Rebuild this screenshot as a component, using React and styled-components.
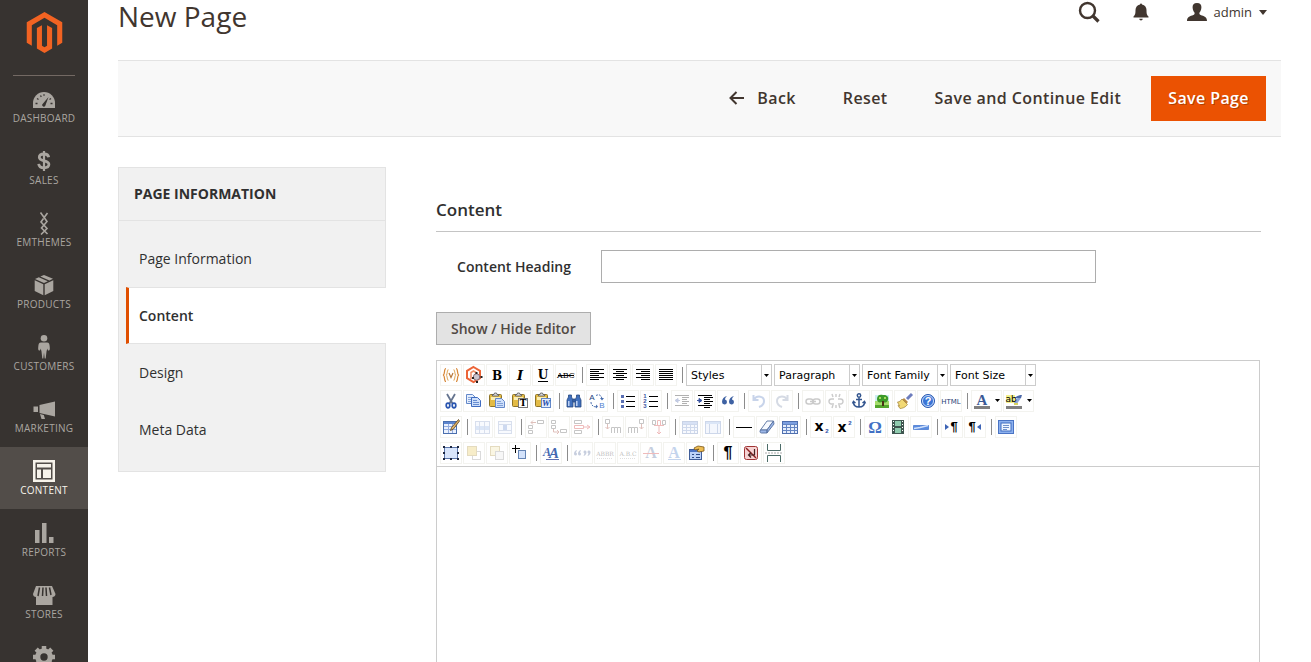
import React from 'react';
import styled, { createGlobalStyle, css } from 'styled-components';

const GlobalStyle = createGlobalStyle`
  *, *::before, *::after { box-sizing: border-box; }
  body {
    margin: 0;
    background: #fff;
    color: #41362f;
    font-family: 'Open Sans', 'Noto Sans', sans-serif;
    font-size: 14px;
  }
  button, input, select, textarea { font: inherit; color: inherit; border-radius: 0; }
  svg { display: block; }
`;

/* ---------- shell ---------- */

const Shell = styled.div`
  display: flex;
  height: 100vh;
  overflow: hidden;
`;

const Sidebar = styled.nav`
  flex: 0 0 88px;
  background: #373330;
  overflow: hidden;
`;

const LogoLink = styled.a`
  display: flex;
  justify-content: center;
  height: 75px;
  padding-top: 12px;
`;

const Menu = styled.ul`
  list-style: none;
  margin: 0;
  padding: 0;
  &::before {
    content: '';
    display: block;
    height: 1px;
    margin: 0 13px -1px;
    background: #736963;
  }
`;

const MenuLink = styled.a`
  display: grid;
  grid-template-rows: 24px 14px;
  justify-items: center;
  align-items: center;
  height: 62px;
  padding-top: 12px;
  align-content: start;
  font-size: 10px;
  line-height: 14px;
  letter-spacing: 0.025em;
  text-transform: uppercase;
  text-decoration: none;
  color: ${(p) => (p.$active ? '#f7f3eb' : '#aaa6a0')};
  background: ${(p) => (p.$active ? '#524d49' : 'transparent')};
`;

const Main = styled.main`
  flex: 1;
  min-width: 0;
  padding: 0 30px;
  overflow: hidden;
`;

/* ---------- header ---------- */

const Header = styled.header`
  display: flex;
  justify-content: space-between;
  height: 60px;
`;

const Title = styled.h1`
  margin: 0;
  font-size: 28px;
  line-height: 32px;
  font-weight: 400;
`;

const HeaderTools = styled.div`
  display: flex;
  align-items: center;
  height: 24px;
  padding-right: 14px;
`;

const HeaderButton = styled.button`
  display: flex;
  align-items: center;
  gap: 7px;
  margin-left: ${(p) => p.$gap || 0}px;
  padding: 0;
  border: 0;
  background: none;
  font-size: 13px;
  line-height: 22px;
`;

const UserName = styled.span`
  padding-bottom: 1px;
`;

/* ---------- page actions ---------- */

const ActionBar = styled.div`
  display: flex;
  justify-content: flex-end;
  align-items: center;
  gap: 13px;
  height: 77px;
  padding-right: 15px;
  border-top: 1px solid #e3e3e3;
  border-bottom: 1px solid #e3e3e3;
  background: #f8f8f8;
`;

const ActionButton = styled.button`
  display: flex;
  align-items: center;
  gap: 13px;
  height: 45px;
  padding: 0 17px 2px;
  border: 0;
  background: none;
  font-size: 16px;
  font-weight: 600;
  letter-spacing: 0.025em;
  ${(p) =>
    p.$primary &&
    css`
      background: #eb5202;
      color: #fff;
      text-shadow: 1px 1px 0 rgba(0, 0, 0, 0.25);
    `}
`;

/* ---------- columns ---------- */

const Columns = styled.div`
  display: grid;
  grid-template-columns: 268px minmax(0, 1fr);
  column-gap: 50px;
  align-items: start;
  padding: 30px 20px 0 0;
`;

const Tabs = styled.aside`
  border: 1px solid #e3e3e3;
  background: #f1f1f1;
`;

const TabsTitle = styled.h2`
  margin: 0;
  padding: 0 15px;
  border-bottom: 1px solid #e3e3e3;
  font-size: 14px;
  line-height: 52px;
  font-weight: 700;
  color: #303030;
  text-transform: uppercase;
`;

const TabList = styled.ul`
  list-style: none;
  margin: 0;
  padding: 9px 0 13px;
`;

const TabLink = styled.a`
  display: block;
  padding: 0 20px;
  line-height: 57px;
  color: #303030;
  text-decoration: none;
  ${(p) =>
    p.$active &&
    css`
      margin: 0 -1px 0 7px;
      padding-left: 10px;
      border: solid #e3e3e3;
      border-width: 1px 0;
      border-left: 3px solid #e04f00;
      background: #fff;
      line-height: 55px;
      font-weight: 600;
    `}
`;

const SectionTitle = styled.h2`
  margin: 0 0 18px;
  padding: 28px 0 7px;
  border-bottom: 1px solid #c4c4c4;
  font-size: 17px;
  line-height: 29px;
  font-weight: 600;
  color: #303030;
`;

const Field = styled.div`
  display: grid;
  grid-template-columns: 20% 60%;
  align-items: center;
  margin-bottom: 29px;
`;

const FieldLabel = styled.label`
  padding-right: 30px;
  text-align: right;
  font-weight: 600;
  color: #303030;
`;

const TextInput = styled.input`
  height: 33px;
  padding: 0 10px;
  border: 1px solid #adadad;
  background: #fff;
`;

const ToggleButton = styled.button`
  display: block;
  height: 33px;
  margin-bottom: 15px;
  padding: 0 14px;
  border: 1px solid #adadad;
  background: #e3e3e3;
  color: #514943;
  font-weight: 600;
`;

/* ---------- editor ---------- */

const Editor = styled.div`
  margin-right: 1px;
  border: 1px solid #ccc;
`;

const Toolbar = styled.div`
  padding: 1px 3px 0;
  border-bottom: 1px solid #ccc;
`;

const ToolRow = styled.div`
  display: flex;
  align-items: center;
  height: 26px;
`;

const ToolButton = styled.button`
  display: flex;
  align-items: center;
  flex: 0 0 auto;
  width: ${(p) => (p.$split ? 31 : 22)}px;
  height: 22px;
  margin-right: 1px;
  padding: 0;
  border: 1px solid #f3f3ef;
  background: #fff;
  svg { opacity: ${(p) => (p.disabled ? 0.3 : 1)}; }
`;

const Separator = styled.span`
  flex: 0 0 1px;
  height: 16px;
  margin: 0 3px 0 4px;
  background: #8c8c8c;
`;

const SelectBox = styled.span`
  display: flex;
  width: 86px;
  height: 22px;
  margin-right: 2px;
  border: 1px solid #ccc;
  background: #fff;
`;

const Select = styled.select`
  flex: 1;
  min-width: 0;
  padding: 0 0 0 4px;
  border: 0;
  background: none;
  appearance: none;
  font-family: 'DejaVu Sans', sans-serif;
  font-size: 11px;
  color: #000;
`;

const SelectArrow = styled.span`
  display: grid;
  place-items: center;
  width: 10px;
  border-left: 1px solid #ccc;
`;

const EditArea = styled.textarea`
  display: block;
  width: 100%;
  height: 400px;
  padding: 8px;
  border: 0;
  outline: 0;
  resize: none;
`;

/* ---------- editor icons, all drawn on a 20 x 20 grid ---------- */

const Glyph = ({ children, w = 20 }) => (
  <svg width={w} height="20" viewBox={`0 0 ${w} 20`} aria-hidden="true">{children}</svg>
);

const SERIF = "'Liberation Serif', serif";
const SLAB = "'DejaVu Serif', serif";
const SANS = "'Liberation Sans', sans-serif";
const WIDE = "'DejaVu Sans', sans-serif";

const T = ({ label, x = 10, y = 15, size = 14, fill = '#000', face = SERIF, bold, italic }) => (
  <text
    x={x}
    y={y}
    fontSize={size}
    fill={fill}
    textAnchor="middle"
    fontFamily={face}
    fontWeight={bold ? 700 : 400}
    fontStyle={italic ? 'italic' : 'normal'}
  >
    {label}
  </text>
);

const Lines = ({ d, color = '#000', w = 1 }) => <path d={d} stroke={color} strokeWidth={w} fill="none" />;

const Sheet = ({ x, y, fill = '#e4eefd', stroke = '#6488c8' }) => (
  <g>
    <path d={`M${x + 0.5} ${y + 0.5}h6l3 3v6h-9z`} fill={fill} stroke={stroke} />
    <path d={`M${x + 2} ${y + 3.5}h4M${x + 2} ${y + 5.5}h6M${x + 2} ${y + 7.5}h6`} stroke={stroke} opacity=".7" />
  </g>
);

const Clipboard = () => (
  <g>
    <rect x="2.5" y="3.500" width="12" height="12" rx="1" fill="#e3bb45" stroke="#8f7426" />
    <path d="M4 7.500h9" stroke="#fbeeb4" strokeWidth="3" />
    <path d="M5.500 5V3.500H7L7.500 2h2l.5 1.500h1.500V5z" fill="#dcdcdc" stroke="#555" strokeWidth=".8" />
  </g>
);

const Grid = () => (
  <g>
    <rect x="2.500" y="4.500" width="15" height="12" fill="#e6eefc" stroke="#4f6fae" />
    <path d="M3 6h14" stroke="#7c9fe0" strokeWidth="2" />
    <path d="M2.500 7.500h15M2.500 10.500h15M2.500 13.500h15M6.500 7v9M10.500 7v9M14.500 7v9" stroke="#6485c2" fill="none" />
  </g>
);

const icons = {
  variable: (
    <g stroke="#d8893a" fill="none" strokeWidth="1.200">
      <path d="M5 3.500C2.500 3.500 4.500 9.500 2 10c2.500.5.5 6.500 3 6.500M15 3.500c2.500 0 .5 6 3 6.500-2.500.5-.5 6.500-3 6.500" />
      <path d="M7.500 4.500C5.500 5 7 9.500 5 10c2 .5.5 5 2.500 5.500M12.500 4.500c2 .5.5 5 2.500 5.500-2 .5-.5 5-2.500 5.500" stroke="#e3b26f" />
      <path d="M8 8l2 4.500L12 8" stroke="#b8783a" />
    </g>
  ),
  widget: (
    <g>
      <path d="M9.500 2l6.500 3.800v7.400L9.500 17 3 13.200V5.800z" fill="#fff" stroke="#ec6437" strokeWidth="2" />
      <path d="M7 14V7.500L9.500 6 12 7.500V14" fill="none" stroke="#f0906a" strokeWidth="1.600" />
      <circle cx="12.500" cy="12" r="3.200" fill="#c9c5cf" stroke="#8a6d78" />
      <path d="M11.500 7h2v2h-2zM16.500 11h2v2h-2zM12 16h2v2h-2zM8 12h2v2H8z" fill="#222" />
    </g>
  ),
  bold: <T label="B" size={12} face={SLAB} bold />,
  italic: <T label="I" size={13} face={SLAB} bold italic />,
  underline: (<g><T label="U" size={12} y={14} face={SLAB} bold /><Lines d="M5 16.500h10" /></g>),
  strike: (<g><T label="ABC" size={8} y={13} face={SLAB} /><Lines d="M2 10.500h16" /></g>),
  left: <Lines d="M3 4.500h14M3 6.500h9M3 8.500h14M3 10.500h9M3 12.500h14M3 14.500h9" />,
  center: <Lines d="M3 4.500h14M6 6.500h8M3 8.500h14M6 10.500h8M3 12.500h14M6 14.500h8" />,
  right: <Lines d="M3 4.500h14M8 6.500h9M3 8.500h14M8 10.500h9M3 12.500h14M8 14.500h9" />,
  full: <Lines d="M3 4.500h14M3 6.500h14M3 8.500h14M3 10.500h14M3 12.500h14M3 14.500h14" />,
  cut: (
    <g fill="none">
      <path d="M6 3l5.500 9.500M14 3L8.500 12.500" stroke="#66758f" strokeWidth="1.800" />
      <ellipse cx="7" cy="14.500" rx="1.800" ry="2.300" stroke="#2a56b0" strokeWidth="1.700" />
      <ellipse cx="13" cy="14.500" rx="1.800" ry="2.300" stroke="#2a56b0" strokeWidth="1.700" />
    </g>
  ),
  copy: (<g><Sheet x={2} y={3} /><Sheet x={7} y={6} fill="#cfe0fb" stroke="#3f6cc0" /></g>),
  paste: (<g><Clipboard /><Sheet x={8} y={7} fill="#cfe0fb" /></g>),
  pastetext: (
    <g><Clipboard /><rect x="8.500" y="7.500" width="9" height="9" fill="#fff" stroke="#777" />
      <T label="T" x={13} y={15} size={9} face={SLAB} bold /></g>
  ),
  pasteword: (
    <g><Clipboard /><rect x="8.500" y="7.500" width="9" height="9" fill="#e4eefd" stroke="#6488c8" />
      <T label="W" x={13} y={15} size={9} bold italic fill="#1d4aa8" /></g>
  ),
  search: (
    <g fill="#4070bd" stroke="#26487f" strokeWidth=".8">
      <path d="M4.500 4h3v2L9 9v7H3V9l1.500-3zM12.500 4h3v2L17 9v7h-6V9l1.500-3z" />
      <path d="M9 8h2v3H9z" />
      <path d="M4.800 10v5M12.800 10v5" stroke="#c7dafa" strokeWidth="1.400" />
    </g>
  ),
  replace: (
    <g>
      <T label="A" x={5} y={9} size={8} face={SANS} fill="#223f80" />
      <T label="B" x={15} y={17} size={8} face={SANS} fill="#4f7fd0" />
      <path d="M9 4.500c3-1.500 5-.5 6 3M4 11c0 3 2 5 6 5" fill="none" stroke="#4a6fae" strokeDasharray="2 1" />
      <path d="M13 7h4l-2 2.500zM9 13.500v4l2-2z" fill="#4a6fae" />
    </g>
  ),
  bullist: (
    <g><path d="M3 4h3v3H3zM3 9h3v3H3zM3 14h3v3H3z" fill="#5a70b4" /><Lines d="M8 5.500h9M8 10.500h9M8 15.500h9" /></g>
  ),
  numlist: (
    <g>
      {['1', '2', '3'].map((n, i) => (
        <T key={n} label={n} x={4} y={7 + i * 5} size={6} bold face={SANS} fill="#3a55a0" />
      ))}
      <Lines d="M8 5.500h9M8 10.500h9M8 15.500h9" />
    </g>
  ),
  outdent: (
    <g><Lines d="M3 4.500h14M10 6.500h7M10 8.500h5M10 10.500h7M10 12.500h5M3 14.500h14" /><path d="M8 9.500H5M6 7.500l-3 2 3 2z" stroke="#3a55a0" fill="#3a55a0" /></g>
  ),
  indent: (
    <g><Lines d="M3 4.500h14M9 6.500h9M9 8.500h6M9 10.500h9M9 12.500h6M3 14.500h14M9 16.500h6" /><path d="M2 9.500h4M4 7.500l3 2-3 2z" stroke="#3a55a0" fill="#3a55a0" /></g>
  ),
  quote: (
    <g fill="#3f62a3"><path d="M9 5c-3 .8-5 2.800-5 6a2.500 2.500 0 1 0 3-2.500C7 7 8 6 9 5zM16 5c-3 .8-5 2.800-5 6a2.500 2.500 0 1 0 3-2.500C14 7 15 6 16 5z" /></g>
  ),
  undo: <path d="M4.500 4v5h5M5 8.500C8 4 15 5 15 10c0 3-2 5-5 6" fill="none" stroke="#4b72bd" strokeWidth="2" />,
  redo: <path d="M15.500 4v5h-5M15 8.500C12 4 5 5 5 10c0 3 2 5 5 6" fill="none" stroke="#7788a8" strokeWidth="2" />,
  link: (
    <g fill="none" stroke="#555" strokeWidth="1.500"><rect x="3" y="8" width="7" height="5" rx="2.500" /><rect x="10" y="8" width="7" height="5" rx="2.500" /><path d="M7 10.500h6" /></g>
  ),
  unlink: (
    <g fill="none" stroke="#555" strokeWidth="1.400"><path d="M8 8H5.500a2.500 2.500 0 0 0 0 5H8M12 8h2.500a2.500 2.500 0 0 1 0 5H12" /><path d="M10 3v3M6 3l1 3M14 3l-1 3M10 14v3M6 17l1-3M14 17l-1-3" /></g>
  ),
  anchor: (
    <g fill="none" stroke="#34568f" strokeWidth="1.500"><circle cx="10" cy="4.500" r="1.700" /><path d="M10 6.500V16M7 8.500h6M4.500 11c0 3.500 2.500 5 5.500 5s5.500-1.500 5.500-5" /><path d="M3.500 12.500l1-2 2 1.500M16.500 12.500l-1-2-2 1.500" /></g>
  ),
  image: (
    <g>
      <rect x="3" y="4" width="14" height="13" fill="#a5dd6a" />
      <path d="M3 4h14v6H3z" fill="#cdeef2" />
      <path d="M3 14h14v3H3z" fill="#54a52c" />
      <path d="M5 8c0-4 3-5 6-4 4-.5 6 2 5 5-1 3-4 3-6 2-3 1-5 0-5-3z" fill="#3c9a28" />
      <path d="M7 6h2v2H7zM12 6h2v2h-2z" fill="#a4db5e" />
      <path d="M10 10h2v5h-2z" fill="#4b3216" />
    </g>
  ),
  cleanup: (
    <g><path d="M17 3l-5 5" stroke="#6d7dbd" strokeWidth="3" /><path d="M9 7l4 4-2 2-4-4z" fill="#b98a45" /><path d="M7 8l5.500 5.500C10.500 16.500 7 17.500 5 17.500L3 14.500l1.500.5L2.500 11c2 0 3.500-1.500 4.500-3z" fill="#f2d975" stroke="#a08336" strokeWidth=".7" /></g>
  ),
  help: (
    <g><circle cx="10" cy="10" r="6.500" fill="#3a74d6" stroke="#2a58ae" /><circle cx="10" cy="10" r="5.500" fill="none" stroke="#c9dcfa" />
      <T label="?" y={14} size={11} bold face={SANS} fill="#fff" /></g>
  ),
  html: <T label="HTML" y={13} size={7} face={WIDE} fill="#1f4274" />,
  forecolor: (
    <g><T label="A" x={10} y={14} size={15} bold fill="#3b5a96" /><path d="M2 15h16v3H2z" fill="#808080" /><path d="M23 8h5l-2.500 3z" /></g>
  ),
  backcolor: (
    <g><path d="M2 4h9v8H2z" fill="#f3f08a" /><path d="M11 13l5-7" stroke="#8ea6d8" strokeWidth="3" /><path d="M10 7c3-2 5-3 8-3l-1 3z" fill="#4d69a8" /><path d="M10 13h4" stroke="#d9d45f" strokeWidth="2" />
      <T label="ab" x={7} y={11} size={9} face={WIDE} /><path d="M2 15h16v3H2z" fill="#808080" /><path d="M23 8h5l-2.500 3z" /></g>
  ),
  table: (
    <g><rect x="2.500" y="4.500" width="13" height="12" fill="#eaf1fd" stroke="#4a6fae" /><path d="M3 6h12" stroke="#5c85cf" strokeWidth="2" /><path d="M3 9.500h12M3 12.500h12M7.500 7v9M11.500 7v9" stroke="#94ade0" />
      <path d="M17.500 2.500l-7 8-1 3 3-1.500 6-8z" fill="#e0b268" stroke="#59431f" strokeWidth=".8" /></g>
  ),
  rowprops: (<g><rect x="3.500" y="4.500" width="14" height="12" fill="#eaf1fd" stroke="#7f97c6" /><path d="M4 9h13v4H4z" fill="#8caee8" /><path d="M7.500 5v11M12.500 5v11" stroke="#7f97c6" /></g>),
  cellprops: (<g><rect x="3.500" y="4.500" width="13" height="12" fill="#eaf1fd" stroke="#7f97c6" /><path d="M8 8h4v5H8z" fill="#5c85cf" /><path d="M4 7.500h12M4 13.500h12" stroke="#7f97c6" /></g>),
  rowbefore: (<g fill="none" stroke="#444"><path d="M2.500 8.500h4v3h-4zM2.500 13.500h4v3h-4zM11.500 3.500h6v3h-6z" /><path d="M10 5.500H5M7 3.500l-2 2 2 2" stroke="#932" /></g>),
  rowafter: (<g fill="none" stroke="#444"><path d="M2.500 3.500h4v3h-4zM2.500 8.500h4v3h-4zM11.500 12.500h6v3h-6z" /><path d="M4.500 12v3H10M8 13l2 2-2 2" stroke="#932" /></g>),
  rowdelete: (<g fill="none" stroke="#444"><path d="M2.500 3.500h7v3h-7zM2.500 13.500h7v3h-7z" /><path d="M2.500 8.500h9v3h-9zM11 10h7M15 8l3 2-3 2" stroke="#c22" /></g>),
  colbefore: (<g fill="none" stroke="#444"><path d="M2.500 2.500h4v4h-4zM8.500 16V10.500h3V16M14.500 16V10.500h3V16M11.500 10.500h3" /><path d="M4.500 7v5M2.500 10l2 2 2-2" stroke="#932" /></g>),
  colafter: (<g fill="none" stroke="#444"><path d="M13.500 2.500h4v4h-4zM2.500 16V10.500h3V16M8.500 16V10.500h3V16M5.500 10.500h3" /><path d="M15.500 7v5M13.500 10l2 2 2-2" stroke="#932" /></g>),
  coldelete: (<g fill="none" stroke="#c22"><path d="M3.500 3.500h3v4h-3zM13.500 3.500h3v4h-3z" stroke="#444" /><path d="M8.500 3.500h3v5h-3zM10 9v8M8 15l2 2 2-2M5 8.500h10" /></g>),
  split: <Grid />,
  merge: (<g><rect x="2.500" y="4.500" width="15" height="12" fill="#dbe6fa" stroke="#5b7dbd" /><path d="M3 6h14" stroke="#8caee8" strokeWidth="2" /><path d="M6.500 7v9M14.500 7v9" stroke="#5b7dbd" /></g>),
  hr: <Lines d="M2 10.500h16" />,
  eraser: (<g stroke="#56709f" strokeWidth=".9"><path d="M10 4h6.500L10 13H3.500z" fill="#f6f9ff" /><path d="M3.500 13H10v3H4.500C3 16 2.500 14.500 3.500 13zM10 13l6.500-9 .5 3-7 9z" fill="#9db7e8" /></g>),
  grid: <Grid />,
  sub: (<g><T label="x" x={8} y={14} size={14} bold face={WIDE} /><T label="2" x={16} y={16} size={6} bold face={SANS} fill="#2a4fa8" /></g>),
  sup: (<g><T label="x" x={8} y={15} size={14} bold face={WIDE} /><T label="2" x={16} y={8} size={6} bold face={SANS} fill="#2a4fa8" /></g>),
  omega: <T label="Ω" y={16} size={17} bold fill="#4170c4" />,
  media: (<g><rect x="4" y="3" width="12" height="14" fill="#3f5650" /><path d="M7 4h6v5H7zM7 11h6v5H7z" fill="#8fcbae" /><path d="M5.500 4v12M14.500 4v12" stroke="#fff" strokeDasharray="1 2" /></g>),
  advhr: (<g><path d="M2.500 8.500h15v4h-15z" fill="#5a8ce0" stroke="#5f8ad6" /><path d="M3 11.500l6-1 8-2" stroke="#d2e2fc" strokeWidth="1.500" /></g>),
  ltr: (<g><path d="M3 7l4 3-4 3z" fill="#3d64b5" /><T label="¶" x={12} y={14} size={13} bold face={SANS} /></g>),
  rtl: (<g><T label="¶" x={7} y={14} size={13} bold face={SANS} /><path d="M16 7l-4 3 4 3z" fill="#3d64b5" /></g>),
  fullscreen: (<g><rect x="2.500" y="3.500" width="15" height="13" fill="#8db1ee" stroke="#4a74c4" /><rect x="5" y="6" width="10" height="8" fill="#f0f6ff" stroke="#3f6cc0" /><path d="M7 8.500h6M7 10.500h6M7 12.500h4" stroke="#6f90ca" /></g>),
  layer: (<g><rect x="3.500" y="4.500" width="13" height="11" fill="#d8e5fb" stroke="#5b76ab" /><path d="M2 3h2v2H2zM16 3h2v2h-2zM2 15h2v2H2zM16 15h2v2h-2zM9 3h2v2H9zM9 15h2v2H9zM2 9h2v2H2zM16 9h2v2h-2z" fill="#1d2740" /></g>),
  forward: (<g><rect x="8.500" y="8.500" width="8" height="8" fill="#fff" stroke="#888" /><rect x="3.500" y="3.500" width="9" height="9" fill="#e5c550" stroke="#a88c2e" /></g>),
  backward: (<g><rect x="3.500" y="3.500" width="9" height="9" fill="#efe3a6" stroke="#a88c2e" /><rect x="8.500" y="8.500" width="8" height="8" fill="#e8e8e8" stroke="#888" /></g>),
  absolute: (<g><rect x="8.500" y="7.500" width="7" height="8" fill="#d3e2fb" stroke="#6484b5" /><path d="M5.500 2v8M2 5.500h8" stroke="#000" /></g>),
  style: (
    <g><T label="A" x={6} y={13} size={12} italic bold fill="#4468b0" /><T label="A" x={13} y={15} size={15} italic bold fill="#4468b0" /><Lines d="M5 16.500h13" color="#5d6fb2" /></g>
  ),
  cite: (
    <g fill="#4a5f94">
      <path d="M5 7c-2 .5-3 2-3 4a1.500 1.500 0 1 0 2-1.500zM9 7c-2 .5-3 2-3 4a1.500 1.500 0 1 0 2-1.500z" />
      <path d="M11.500 13c2-.5 3-2 3-4a1.500 1.500 0 1 0-2 1.500zM15.500 13c2-.5 3-2 3-4a1.500 1.500 0 1 0-2 1.500z" />
    </g>
  ),
  abbr: (<g><T label="ABBR" y={13} size={6} face={SLAB} fill="#222" /><path d="M2 15.500h16" stroke="#999" strokeDasharray="1 1" /></g>),
  acronym: (<g><T label="A.B.C" y={13} size={6} face={SLAB} fill="#222" /><path d="M2 15.500h16" stroke="#999" strokeDasharray="1 1" /></g>),
  del: (<g><T label="A" y={15} size={16} bold fill="#445f96" /><Lines d="M2 10.500h16" color="#c22" /></g>),
  ins: (<g><T label="A" y={15} size={16} bold fill="#3f72c4" /><Lines d="M4 16.500h13" color="#3f72c4" /></g>),
  attribs: (
    <g><rect x="2.500" y="6.500" width="12" height="10" fill="#bcd2f8" stroke="#3f5d98" /><path d="M3 8h11" stroke="#4d74c5" strokeWidth="2" /><path d="M5 11.500h2M9 11.500h4M5 14.500h2M9 14.500h4" stroke="#2f4d88" />
      <path d="M7 5l4-2 6 1v4l-5 1-2-1 2-2-4 1z" fill="#edbc52" stroke="#7a5618" strokeWidth=".8" /></g>
  ),
  visualchars: <T label="¶" y={15} size={16} bold face={SANS} />,
  nonbreaking: (
    <g><rect x="3.500" y="3.500" width="13" height="13" rx="2" fill="#f6d3d3" stroke="#a03434" /><path d="M5 5l10 10" stroke="#8d2020" fill="none" strokeWidth="1.400" /><path d="M13.500 6v6H8M10 9.500L7.500 12l2.500 2.500" stroke="#442222" fill="none" strokeWidth="1.200" /></g>
  ),
  pagebreak: (
    <g fill="none" stroke="#4c6c68"><path d="M3.500 1v6.500h13V1M3.500 19v-6.500h13V19" /><path d="M1 10h18" strokeDasharray="2 1" stroke="#aaa" /></g>
  ),
};

/* '|' is a separator, '-' marks an unavailable command, '+' a button with a menu arrow */
const rows = [
  ['variable', 'widget', 'bold', 'italic', 'underline', 'strike', '|', 'left', 'center', 'right', 'full', '|'],
  ['cut', 'copy', 'paste', 'pastetext', 'pasteword', '|', 'search', 'replace', '|', 'bullist', 'numlist', '|',
    '-outdent', 'indent', 'quote', '|', '-undo', '-redo', '|', '-link', '-unlink', 'anchor', 'image', 'cleanup',
    'help', 'html', '|', '+forecolor', '+backcolor'],
  ['table', '|', '-rowprops', '-cellprops', '|', '-rowbefore', '-rowafter', '-rowdelete', '|', '-colbefore',
    '-colafter', '-coldelete', '|', '-split', '-merge', '|', 'hr', 'eraser', 'grid', '|', 'sub', 'sup', '|',
    'omega', 'media', 'advhr', '|', 'ltr', 'rtl', '|', 'fullscreen'],
  ['layer', '-forward', '-backward', 'absolute', '|', 'style', '|', '-cite', '-abbr', '-acronym', '-del', '-ins',
    'attribs', '|', 'visualchars', 'nonbreaking', 'pagebreak'],
];

const Tool = ({ code }) => {
  if (code === '|') return <Separator />;
  const name = code.replace(/^[-+]/, '');
  const split = code[0] === '+';
  return (
    <ToolButton type="button" aria-label={name} disabled={code[0] === '-'} $split={split}>
      <Glyph w={split ? 29 : 20}>{icons[name]}</Glyph>
    </ToolButton>
  );
};

const ToolSelect = ({ label }) => (
  <SelectBox>
    <Select aria-label={label}><option>{label}</option></Select>
    <SelectArrow><svg width="5" height="3" viewBox="0 0 5 3" aria-hidden="true"><path d="M0 0h5L2.500 3z" /></svg></SelectArrow>
  </SelectBox>
);

/* ---------- sidebar icons, 24 x 24 ---------- */

const NavGlyph = ({ children }) => (
  <svg width="24" height="24" viewBox="0 0 24 24" fill="currentColor" aria-hidden="true">{children}</svg>
);

const dark = '#373330';

const menu = [
  { name: 'Dashboard', label: 'Dashboard', icon: (
    <g>
      <path d="M1 21v-5a11 11 0 0 1 22 0v5z" />
      <path d="M10.200 17.500L16.500 10l-3.200 8.800a1.700 1.700 0 0 1-3.100-1.300z" fill={dark} />
      <path d="M3.500 16.500h2M18.500 16.500h2M5 11.500l1.500 1M8.500 8.500l.8 1.300M12 7.300v1.500M17.500 12.500l1.500-1" stroke={dark} strokeWidth="1.300" />
    </g>
  ) },
  { name: 'Sales', label: 'Sales', icon: (
    <g fill="none" stroke="currentColor">
      <path d="M16.700 8.300C16.300 6 14.500 5 12 5 9 5 7.300 6.300 7.300 8.300c0 4.600 9.600 2.400 9.600 7 0 2.200-2 3.500-4.900 3.500-3 0-5-1.300-5.300-4" strokeWidth="2.800" />
      <path d="M12 2v20" strokeWidth="2.200" />
    </g>
  ) },
  { name: 'Emthemes', label: 'Emthemes', icon: (
    <path d="M8.500 1.500l6.500 9-5.500 6.500 6 6M15.500 2L12.500 6M11.500 7.500L9 11l6 6.500-6 6" fill="none" stroke="currentColor" strokeWidth="1.600" />
  ) },
  { name: 'Products', label: 'Products', icon: (
    <path d="M12 2l9 3.800-3.600 1.700L8.300 3.600zM6.800 4.300l9 3.900L12 10 3 5.900zM2.700 7.300l8.600 4v11L2.700 18zM21.300 7.300l-8.600 4v11l8.600-4.300z" />
  ) },
  { name: 'Customers', label: 'Customers', icon: (
    <g>
      <circle cx="12" cy="3.300" r="3.300" />
      <path d="M9 7.500h6c2 0 2.500 1.500 2.700 4 .2 2 .3 3.500-.7 4-1 .3-1.500-.8-1.700-2l-.8 3-.8 7h-1l-.7-6-.7 6h-1l-.8-7-.8-3c-.2 1.200-.7 2.300-1.700 2-1-.5-.9-2-.7-4 .2-2.500.7-4 2.700-4z" />
    </g>
  ) },
  { name: 'Marketing', label: 'Marketing', icon: (
    <path d="M7.500 8L23 4.500v15L7.500 16zM1.500 9.500H6v5.500H1.500zM8 17l3.800 1 1.200 4H9.500z" />
  ) },
  { name: 'Content', label: 'Content', active: true, icon: (
    <g>
      <path d="M1 1h22v22H1z" /><path d="M3.500 3.500h17v17h-17z" fill="#524d49" /><path d="M5 5h14v3.500H5zM5 10.500h4v8.500H5zM11 10.500h8v8.500h-8z" />
    </g>
  ) },
  { name: 'Reports', label: 'Reports', icon: <path d="M3 9h4.500v13H3zM10 2h4.500v20H10zM17 16h4.500v6H17z" /> },
  { name: 'Stores', label: 'Stores', icon: (
    <g>
      <path d="M4 3h16l3.500 8c0 2-1.500 3-3 3v8H4v-8c-1.500 0-3-1-3-3z" />
      <path d="M7.500 4.500L6 13M11 4.500l-.5 8.500M14 4.500l.5 8.500M17.500 4.500L19 12" stroke={dark} strokeWidth="1.500" />
    </g>
  ) },
  { name: 'System', icon: (
    <g>
      <circle cx="12" cy="12" r="6.200" fill="none" stroke="currentColor" strokeWidth="5" />
      <path d="M12 1v4M12 19v4M1 12h4M19 12h4M4.200 4.200l3 3M16.800 16.800l3 3M4.200 19.800l3-3M16.800 7.200l3-3" stroke="currentColor" strokeWidth="4.500" />
    </g>
  ) },
];

const MagentoLogo = () => (
  <svg width="41" height="41" viewBox="0 0 24 24" fill="#f26322" aria-hidden="true">
    <path d="M12 24l-4.455-2.572v-12l2.970-1.715v12.001l1.485.902 1.485-.902V7.713l2.971 1.715v12L12 24zM22.391 6v12l-2.969 1.714V7.713L12 3.430 4.574 7.713v12.001L1.609 18V6L12 0l10.391 6z" />
  </svg>
);

const tabs = ['Page Information', 'Content', 'Design', 'Meta Data'];

export default function App() {
  return (
    <>
      <GlobalStyle />
      <Shell>
        <Sidebar aria-label="Main menu">
          <LogoLink href="#" aria-label="Magento"><MagentoLogo /></LogoLink>
          <Menu>
            {menu.map(({ name, label, icon, active }) => (
              <li key={name}>
                <MenuLink href="#" aria-label={name} $active={active}>
                  <NavGlyph>{icon}</NavGlyph>
                  {label && <span>{label}</span>}
                </MenuLink>
              </li>
            ))}
          </Menu>
        </Sidebar>

        <Main>
          <Header>
            <Title>New Page</Title>
            <HeaderTools>
              <HeaderButton type="button" aria-label="Search">
                <svg width="22" height="22" viewBox="0 0 22 22" fill="none" stroke="#41362f">
                  <circle cx="9.500" cy="9.500" r="7.500" strokeWidth="2.400" /><path d="M15 15l5.500 5.500" strokeWidth="3.200" />
                </svg>
              </HeaderButton>
              <HeaderButton type="button" aria-label="Notifications" $gap={33}>
                <svg width="16" height="18" viewBox="0 0 16 18" fill="#41362f">
                  <path d="M7 1.500a1 1 0 0 1 2 0c3 .6 4.500 3 4.500 5.500 0 4 .5 5 2 6.500v1H.5v-1c1.500-1.500 2-2.500 2-6.500 0-2.500 1.500-4.900 4.500-5.500zM6.300 15.700h3.400c0 2.300-3.400 2.300-3.400 0z" />
                </svg>
              </HeaderButton>
              <HeaderButton type="button" $gap={38}>
                <svg width="20" height="18" viewBox="0 0 20 18" fill="#41362f" aria-hidden="true">
                  <path d="M10 0c3.200 0 4.600 2 4.400 4.500-.2 2.500-.9 4-2 5.300-.2 1.500.5 2.200 2.500 2.800 3 .9 5.100 1.900 5.100 5.400H0c0-3.500 2.100-4.500 5.100-5.400 2-.6 2.700-1.300 2.500-2.800-1.100-1.300-1.800-2.800-2-5.300C5.400 2 6.800 0 10 0z" />
                </svg>
                <UserName>admin</UserName>
                <svg width="8" height="5" viewBox="0 0 8 5" fill="#41362f" aria-hidden="true"><path d="M0 0h8L4 5z" /></svg>
              </HeaderButton>
            </HeaderTools>
          </Header>

          <ActionBar>
            <ActionButton type="button">
              <svg width="15" height="14" viewBox="0 0 15 14" fill="none" stroke="#41362f" strokeWidth="2" aria-hidden="true">
                <path d="M15 7H2M7.500 1L1.500 7l6 6" />
              </svg>
              Back
            </ActionButton>
            <ActionButton type="button">Reset</ActionButton>
            <ActionButton type="button">Save and Continue Edit</ActionButton>
            <ActionButton type="button" $primary>Save Page</ActionButton>
          </ActionBar>

          <Columns>
            <Tabs>
              <TabsTitle>Page Information</TabsTitle>
              <TabList>
                {tabs.map((t) => (
                  <li key={t}><TabLink href="#" $active={t === 'Content'}>{t}</TabLink></li>
                ))}
              </TabList>
            </Tabs>

            <section>
              <SectionTitle>Content</SectionTitle>
              <Field>
                <FieldLabel htmlFor="content-heading">Content Heading</FieldLabel>
                <TextInput id="content-heading" type="text" />
              </Field>
              <ToggleButton type="button">Show / Hide Editor</ToggleButton>
              <Editor>
                <Toolbar role="toolbar" aria-label="Editor">
                  {rows.map((row, i) => (
                    <ToolRow key={i}>
                      {row.map((code, j) => <Tool key={j} code={code} />)}
                      {i === 0 && ['Styles', 'Paragraph', 'Font Family', 'Font Size'].map((l) => (
                        <ToolSelect key={l} label={l} />
                      ))}
                    </ToolRow>
                  ))}
                </Toolbar>
                <EditArea aria-label="Page content" />
              </Editor>
            </section>
          </Columns>
        </Main>
      </Shell>
    </>
  );
}
